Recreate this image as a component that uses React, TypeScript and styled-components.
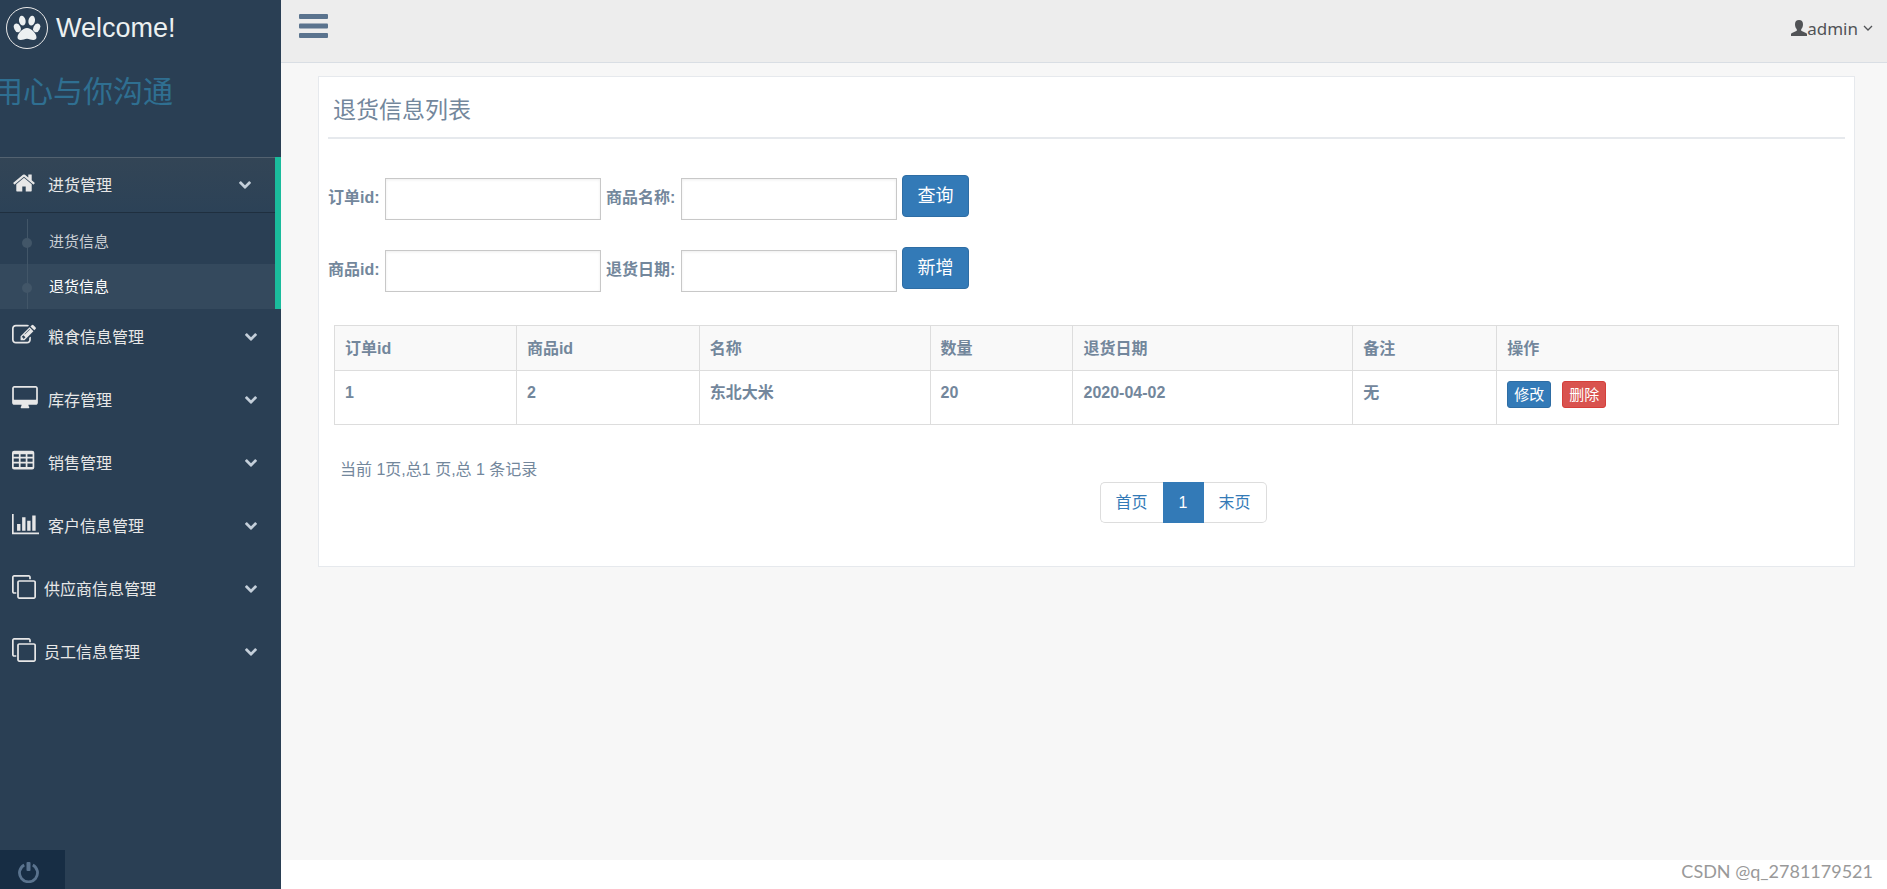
import React from 'react';
import styled, { createGlobalStyle } from 'styled-components';

const GlobalStyle = createGlobalStyle`
  *, *::before, *::after { box-sizing: border-box; }
  body {
    margin: 0;
    background: #fff;
    color: #73879c;
    font-family: "Liberation Sans", "Noto Sans CJK SC", sans-serif;
    font-size: 16px;
    line-height: 24px;
  }
  button, input { font: inherit; }
  a { color: inherit; text-decoration: none; }
  svg { display: block; fill: currentColor; flex: none; }
`;

const Page = styled.div`
  display: flex;
  min-height: 100vh;
`;

const Sidebar = styled.aside`
  display: flex;
  flex-direction: column;
  flex: none;
  width: 281px;
  overflow: hidden;
  background: #2a3f54;
  color: #e7e7e7;
`;

const Brand = styled.a`
  display: flex;
  align-items: center;
  gap: 8px;
  height: 56px;
  padding-left: 6px;
  color: #ecf0f1;
  font-size: 27px;
`;

const BrandMark = styled.span`
  display: flex;
  align-items: center;
  justify-content: center;
  width: 42px;
  height: 42px;
  border: 1px solid #eaeaea;
  border-radius: 50%;
`;

const Slogan = styled.p`
  margin: 0 0 0 -7px;
  height: 101px;
  padding-top: 12px;
  color: #2f6f91;
  font-size: 30px;
  line-height: 48px;
  white-space: nowrap;
`;

const Menu = styled.ul`
  display: flex;
  flex-direction: column;
  gap: 7px;
  margin: 0;
  padding: 0;
  list-style: none;
`;

const MenuItem = styled.li<{ $open?: boolean }>`
  border-right: ${p => (p.$open ? '6px solid #1abb9c' : '0')};
  margin-bottom: ${p => (p.$open ? '-7px' : '0')};
`;

const MenuLink = styled.button<{ $open?: boolean }>`
  display: flex;
  align-items: center;
  width: 100%;
  height: 56px;
  padding: 0 24px 0 12px;
  border: 0;
  border-top: 1px solid ${p => (p.$open ? '#536270' : 'transparent')};
  border-bottom: 1px solid ${p => (p.$open ? '#1f2f3f' : 'transparent')};
  background: ${p => (p.$open ? 'linear-gradient(#334556, #2c4257)' : 'none')};
  color: inherit;
  text-align: left;
  cursor: pointer;
`;

const MenuIcon = styled.span<{ $narrow?: boolean }>`
  width: ${p => (p.$narrow ? '32px' : '36px')};
  padding-bottom: 4px;
`;

const MenuText = styled.span`
  flex: 1;
  padding-top: 2px;
`;

const SubMenu = styled.ul`
  margin: 6px 0 0;
  padding: 0;
  list-style: none;
`;

const SubLink = styled.a<{ $current?: boolean }>`
  display: flex;
  align-items: center;
  position: relative;
  height: 45px;
  padding-left: 49px;
  background: ${p => (p.$current ? '#34495d' : 'none')};
  color: ${p => (p.$current ? '#fff' : '#cacfd4')};
  font-size: 15px;

  &::before {
    content: '';
    position: absolute;
    left: 27px;
    top: 0;
    bottom: 0;
    border-left: 1px solid #425668;
  }
  &::after {
    content: '';
    position: absolute;
    left: 22px;
    top: 19px;
    width: 10px;
    height: 10px;
    border-radius: 50%;
    background: #425668;
  }
`;

const SidebarFooter = styled.div`
  margin-top: auto;
`;

const PowerButton = styled.button`
  display: flex;
  width: 65px;
  height: 39px;
  padding: 12px 18px;
  border: 0;
  background: #172d44;
  color: #5a738e;
`;

const Main = styled.div`
  display: flex;
  flex: 1;
  flex-direction: column;
  min-width: 0;
`;

const TopBar = styled.header`
  display: flex;
  justify-content: space-between;
  height: 63px;
  padding: 14px 14px 0 18px;
  border-bottom: 1px solid #d9dee4;
  background: #ededed;
`;

const ToggleButton = styled.button`
  height: 24px;
  padding: 0;
  border: 0;
  background: none;
  color: #5a738e;
`;

const UserLink = styled.a`
  display: flex;
  align-items: center;
  height: 28px;
  color: #515356;
  font-family: "Noto Sans", "Open Sans", sans-serif;
  font-size: 17px;
`;

const UserName = styled.span`
  padding: 1px 5px 0 0;
`;

const Content = styled.main`
  flex: 1;
  padding: 13px 32px 13px 37px;
  background: #f7f7f7;
`;

const Panel = styled.section`
  padding: 18px 9px 43px;
  border: 1px solid #e6e9ed;
  background: #fff;
`;

const PanelTitle = styled.h2`
  margin: 0;
  padding: 0 5px 12px;
  border-bottom: 2px solid #e6e9ed;
  font-size: 23px;
  font-weight: 400;
  line-height: 30px;
`;

const Form = styled.form`
  display: flex;
  flex-direction: column;
  gap: 27px;
  padding: 36px 0 33px;
`;

const FormRow = styled.div`
  display: grid;
  grid-template-columns: 52px 216px 70px 216px 67px;
  align-items: start;
  gap: 5px;
`;

const Label = styled.label`
  height: 45px;
  font-weight: 700;
  line-height: 46px;
  white-space: nowrap;
`;

const TextInput = styled.input`
  width: 100%;
  height: 42px;
  margin: 3px 0 0;
  padding: 0 10px;
  border: 1px solid #c8c8c8;
  background: #fff;
  box-shadow: inset 0 1px 3px #eee;
`;

const Button = styled.button<{ $danger?: boolean; $small?: boolean }>`
  height: ${p => (p.$small ? '27px' : '42px')};
  width: ${p => (p.$small ? '44px' : 'auto')};
  padding: 0;
  border: 1px solid ${p => (p.$danger ? '#d43f3a' : '#2e6da4')};
  border-radius: ${p => (p.$small ? '3px' : '4px')};
  background: ${p => (p.$danger ? '#d9534f' : '#337ab7')};
  color: #fff;
  font-size: ${p => (p.$small ? '15px' : '18px')};
  font-weight: 400;
  line-height: 24px;
`;

const TableWrap = styled.div`
  padding: 0 6px;
`;

const Table = styled.table`
  width: 100%;
  table-layout: fixed;
  border-collapse: collapse;
  font-weight: 700;

  th, td {
    padding: 10px;
    border: 1px solid #ddd;
    text-align: left;
    vertical-align: top;
  }
  th {
    height: 45px;
    padding: 11px 10px 9px;
    background: #f9f9f9;
  }
  td { height: 54px; }
`;

const Col = styled.col<{ $share: number }>`
  width: calc(100% * ${p => p.$share} / 1505);
`;

const Actions = styled.div`
  display: flex;
  gap: 11px;
`;

const Summary = styled.p`
  margin: 33px 0 0;
  padding-left: 12px;
`;

const Pagination = styled.nav`
  display: flex;
  margin-left: 50%;
  padding-left: 13px;
`;

const PageLink = styled.a<{ $active?: boolean }>`
  min-width: 41px;
  height: 41px;
  padding: 8px 15px 0;
  border: 1px solid ${p => (p.$active ? '#337ab7' : '#ddd')};
  background: ${p => (p.$active ? '#337ab7' : '#fff')};
  color: ${p => (p.$active ? '#fff' : '#337ab7')};
  text-align: center;

  &:first-child { border-right: 0; border-radius: 5px 0 0 5px; }
  &:last-child { border-left: 0; border-radius: 0 5px 5px 0; }
`;

const Footer = styled.footer`
  height: 29px;
  padding-right: 14px;
  color: #999;
  font-family: Lato, sans-serif;
  font-size: 18px;
  line-height: 22px;
  text-align: right;
`;

type IconProps = { box: string; d: string; w: number; h: number };
const Icon = ({ box, d, w, h }: IconProps) => (
  <svg viewBox={box} width={w} height={h} aria-hidden="true" fillRule="evenodd">
    <path d={d} />
  </svg>
);

const icons = {
  home: { box: '0 0 1792 1792', w: 24, d: 'M1472 992v480q0 26-19 45t-45 19h-384v-384h-256v384h-384q-26 0-45-19t-19-45v-480q0-1 .5-3t.5-3l575-474 575 474q1 2 1 6zm223-69l-62 74q-8 9-21 11h-3q-13 0-21-7l-692-577-692 577q-12 8-24 7-13-2-21-11l-62-74q-8-10-7-23.5t11-21.5l719-599q32-26 76-26t76 26l244 204v-195q0-14 9-23t23-9h192q14 0 23 9t9 23v408l219 182q10 8 11 21.5t-7 23.5z' },
  edit: { box: '0 0 1792 1792', w: 24, d: 'M888 1184l116-116-152-152-116 116v56h96v96h56zm440-720q-16-16-33 1l-350 350q-17 17-1 33t33-1l350-350q17-17 1-33zm80 594v190q0 119-84.5 203.5t-203.5 84.5h-832q-119 0-203.5-84.5t-84.5-203.5v-832q0-119 84.5-203.5t203.5-84.5h832q63 0 117 25 15 7 18 23 3 17-9 29l-49 49q-14 14-32 8-23-6-45-6h-832q-66 0-113 47t-47 113v832q0 66 47 113t113 47h832q66 0 113-47t47-113v-126q0-13 9-22l64-64q15-15 35-7t20 29zm-96-738l288 288-672 672h-288v-288zm444 132l-92 92-288-288 92-92q28-28 68-28t68 28l152 152q28 28 28 68t-28 68z' },
  desktop: { box: '-64 0 1920 1792', w: 26, d: 'M1728 992v-832q0-13-9.5-22.5t-22.5-9.5h-1600q-13 0-22.5 9.5t-9.5 22.5v832q0 13 9.5 22.5t22.5 9.5h1600q13 0 22.5-9.5t9.5-22.5zm128-832v1088q0 66-47 113t-113 47h-544q0 37 16 77.5t32 71 16 43.5q0 26-19 45t-45 19h-512q-26 0-45-19t-19-45q0-14 16-44t32-70 16-78h-544q-66 0-113-47t-47-113v-1088q0-66 47-113t113-47h1600q66 0 113 47t47 113z' },
  table: { box: '0 0 1792 1792', w: 24, d: 'M160 128h1344q160 0 160 160v1088q0 160-160 160h-1344q-160 0-160-160v-1088q0-160 160-160zM128 384v192h384v-192zM640 384v192h384v-192zM1152 384v192h384v-192zM128 704v256h384v-256zM640 704v256h384v-256zM1152 704v256h384v-256zM128 1088v256h384v-256zM640 1088v256h384v-256zM1152 1088v256h384v-256z' },
  chart: { box: '0 0 2048 1792', w: 27, d: 'M640 896v512h-256v-512h256zm384-512v1024h-256v-1024h256zm1024 1152v128h-2048v-1536h128v1408h1920zm-640-896v768h-256v-768h256zm384-384v1152h-256v-1152h256z' },
  clone: { box: '0 0 1792 1792', w: 24, d: 'M1664 1632v-1088q0-13-9.5-22.5t-22.5-9.5h-1088q-13 0-22.5 9.5t-9.5 22.5v1088q0 13 9.5 22.5t22.5 9.5h1088q13 0 22.5-9.5t9.5-22.5zm128-1088v1088q0 66-47 113t-113 47h-1088q-66 0-113-47t-47-113v-1088q0-66 47-113t113-47h1088q66 0 113 47t47 113zm-384-384v160h-128v-160q0-13-9.5-22.5t-22.5-9.5h-1088q-13 0-22.5 9.5t-9.5 22.5v1088q0 13 9.5 22.5t22.5 9.5h160v128h-160q-66 0-113-47t-47-113v-1088q0-66 47-113t113-47h1088q66 0 113 47t47 113z' },
};

const ChevronBox = styled.span`
  color: #c4cfda;
`;

const Chevron = () => (
  <ChevronBox>
    <Icon box="90 533 1612 1035" w={12} h={8} d="M1683 808l-742 741q-19 19-45 19t-45-19l-742-741q-19-19-19-45.5t19-45.5l166-165q19-19 45-19t45 19l531 531 531-531q19-19 45-19t45 19l166 165q19 19 19 45.5t-19 45.5z" />
  </ChevronBox>
);

const Paw = () => (
  <svg viewBox="0 0 28 26" width="28" height="26" aria-hidden="true">
    <ellipse cx="9.3" cy="5.7" rx="3.3" ry="4.9" transform="rotate(-10 9.3 5.7)" />
    <ellipse cx="18.7" cy="5.7" rx="3.3" ry="4.9" transform="rotate(10 18.7 5.7)" />
    <ellipse cx="4.3" cy="12.8" rx="3.2" ry="4.5" transform="rotate(-25 4.3 12.8)" />
    <ellipse cx="23.7" cy="12.8" rx="3.2" ry="4.5" transform="rotate(25 23.7 12.8)" />
    <path d="M14 13c4.300 0 9.500 5.700 9.500 9.300 0 1.800-1.300 2.700-3.200 2.700-2.300 0-4-1.300-6.300-1.300S10 25 7.700 25c-1.900 0-3.200-.9-3.200-2.700C4.500 18.700 9.700 13 14 13z" />
  </svg>
);

const groups: { text: string; icon: keyof typeof icons; children?: string[] }[] = [
  { text: '进货管理', icon: 'home', children: ['进货信息', '退货信息'] },
  { text: '粮食信息管理', icon: 'edit' },
  { text: '库存管理', icon: 'desktop' },
  { text: '销售管理', icon: 'table' },
  { text: '客户信息管理', icon: 'chart' },
  { text: '供应商信息管理', icon: 'clone' },
  { text: '员工信息管理', icon: 'clone' },
];

const formRows = [
  { fields: [['orderId', '订单id:'], ['goodsName', '商品名称:']], action: '查询' },
  { fields: [['goodsId', '商品id:'], ['returnDate', '退货日期:']], action: '新增' },
];

const columns: [string, number][] = [
  ['订单id', 182], ['商品id', 183], ['名称', 231], ['数量', 143],
  ['退货日期', 280], ['备注', 144], ['操作', 342],
];
const records = [['1', '2', '东北大米', '20', '2020-04-02', '无']];

export default function App() {
  return (
    <>
      <GlobalStyle />
      <Page>
        <Sidebar>
          <Brand href="#">
            <BrandMark><Paw /></BrandMark>
            <span>Welcome!</span>
          </Brand>
          <Slogan>用心与你沟通</Slogan>
          <Menu>
            {groups.map(g => (
              <MenuItem key={g.text} $open={!!g.children}>
                <MenuLink type="button" $open={!!g.children}>
                  <MenuIcon $narrow={g.icon === 'clone'}>
                    <Icon {...icons[g.icon]} h={24} />
                  </MenuIcon>
                  <MenuText>{g.text}</MenuText>
                  <Chevron />
                </MenuLink>
                {g.children && (
                  <SubMenu>
                    {g.children.map((c, i) => (
                      <li key={c}><SubLink href="#" $current={i === 1}>{c}</SubLink></li>
                    ))}
                  </SubMenu>
                )}
              </MenuItem>
            ))}
          </Menu>
          <SidebarFooter>
            <PowerButton type="button" aria-label="Logout">
              <svg viewBox="0 0 21 21" width="21" height="21" aria-hidden="true">
                <path d="M6.200 2.900A9 9 0 1 0 14.800 2.900" fill="none" stroke="currentColor" strokeWidth="2.800" />
                <rect x="8.500" y="0" width="4" height="9" rx="1" />
              </svg>
            </PowerButton>
          </SidebarFooter>
        </Sidebar>
        <Main>
          <TopBar>
            <ToggleButton type="button" aria-label="Toggle menu">
              <svg viewBox="0 0 29 24" width="29" height="24" aria-hidden="true">
                <rect width="29" height="5" rx="1" />
                <rect y="9.500" width="29" height="5" rx="1" />
                <rect y="19" width="29" height="5" rx="1" />
              </svg>
            </ToggleButton>
            <UserLink href="#">
              <svg viewBox="0 0 16 16" width="16" height="16" aria-hidden="true">
                <path d="M8 0C10.600 0 12 1.600 12 4.200c0 2.200-.7 4-1.800 5v1.600L15 13c.8.4 1 .8 1 1.600V16H0v-1.400c0-.8.2-1.200 1-1.600l4.800-2.200V9.200C4.700 8.200 4 6.400 4 4.200 4 1.600 5.400 0 8 0z" />
              </svg>
              <UserName>admin</UserName>
              <svg viewBox="0 0 10 6" width="10" height="6" aria-hidden="true">
                <path d="M1 1l4 4 4-4" fill="none" stroke="currentColor" strokeWidth="1.300" />
              </svg>
            </UserLink>
          </TopBar>
          <Content>
            <Panel>
              <PanelTitle>退货信息列表</PanelTitle>
              <Form>
                {formRows.map(row => (
                  <FormRow key={row.action}>
                    {row.fields.map(([id, text]) => (
                      <React.Fragment key={id}>
                        <Label htmlFor={id}>{text}</Label>
                        <TextInput id={id} type="text" />
                      </React.Fragment>
                    ))}
                    <Button type="button">{row.action}</Button>
                  </FormRow>
                ))}
              </Form>
              <TableWrap>
                <Table>
                  <colgroup>
                    {columns.map(([name, share]) => <Col key={name} $share={share} />)}
                  </colgroup>
                  <thead>
                    <tr>{columns.map(([name]) => <th key={name} scope="col">{name}</th>)}</tr>
                  </thead>
                  <tbody>
                    {records.map(r => (
                      <tr key={r[0]}>
                        {r.map((cell, i) => <td key={i}>{cell}</td>)}
                        <td>
                          <Actions>
                            <Button type="button" $small>修改</Button>
                            <Button type="button" $small $danger>删除</Button>
                          </Actions>
                        </td>
                      </tr>
                    ))}
                  </tbody>
                </Table>
              </TableWrap>
              <Summary>当前 1页,总1 页,总 1 条记录</Summary>
              <Pagination>
                <PageLink href="#">首页</PageLink>
                <PageLink href="#" $active>1</PageLink>
                <PageLink href="#">末页</PageLink>
              </Pagination>
            </Panel>
          </Content>
          <Footer>CSDN @q_2781179521</Footer>
        </Main>
      </Page>
    </>
  );
}
